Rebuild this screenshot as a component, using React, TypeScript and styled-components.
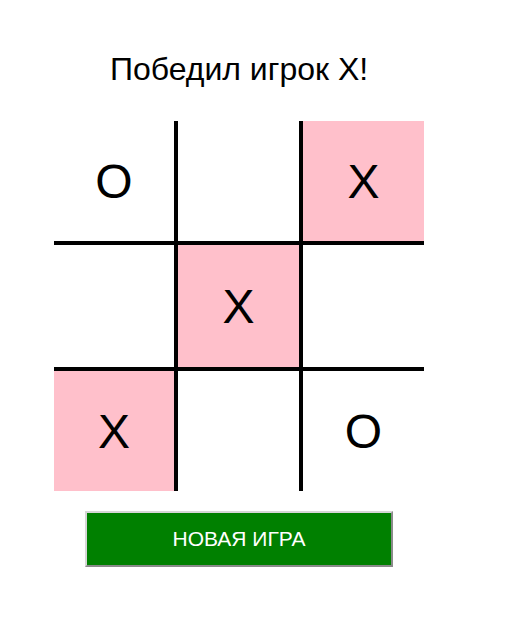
import * as React from "react";
import styled, { createGlobalStyle } from "styled-components";

type Mark = "X" | "O" | null;

const GlobalStyle = createGlobalStyle`
  html, body {
    margin: 0;
    padding: 0;
    background: #ffffff;
  }
  body {
    font-family: "Liberation Sans", Arial, sans-serif;
    color: #000000;
  }
`;

const Page = styled.div`
  width: 478px;
  padding-top: 51px;
  display: flex;
  flex-direction: column;
  align-items: center;
`;

const Title = styled.h1`
  margin: 0 0 34px;
  font-size: 32px;
  line-height: 36px;
  font-weight: normal;
`;

const Board = styled.div`
  display: grid;
  grid-template-columns: 120px 121px 121px;
  grid-template-rows: 120px 122px 120px;
  gap: 4px;
  background: #000000;
`;

const Cell = styled.div<{ $win: boolean }>`
  display: flex;
  align-items: center;
  justify-content: center;
  background: ${(p) => (p.$win ? "#ffc0cb" : "#ffffff")};
  font-size: 48px;
  cursor: pointer;
`;

const NewGame = styled.button`
  margin-top: 20px;
  width: 308px;
  height: 56px;
  background: #008000;
  color: #ffffff;
  font-family: "Liberation Sans", Arial, sans-serif;
  font-size: 21px;
  border-style: solid;
  border-width: 2px;
  border-color: #d6d6d6 #8a8a8a #8a8a8a #d6d6d6;
  cursor: pointer;
`;

const initial: Mark[] = ["O", null, "X", null, "X", null, "X", null, "O"];
const winLine = [2, 4, 6];

export default function App() {
  const [cells, setCells] = React.useState<Mark[]>(initial);
  const won = cells === initial;

  return (
    <>
      <GlobalStyle />
      <Page>
        <Title>{won ? "Победил игрок X!" : "Ходит игрок X"}</Title>
        <Board>
          {cells.map((c, i) => (
            <Cell key={i} $win={won && winLine.includes(i)}>
              {c}
            </Cell>
          ))}
        </Board>
        <NewGame onClick={() => setCells(Array(9).fill(null))}>НОВАЯ ИГРА</NewGame>
      </Page>
    </>
  );
}
